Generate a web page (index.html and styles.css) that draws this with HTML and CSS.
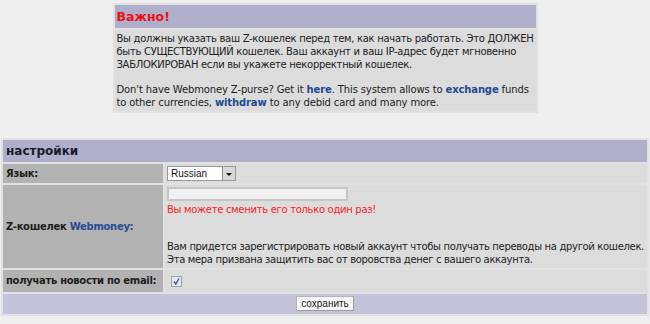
FILE: index.html
```html
<!DOCTYPE html>
<html lang="ru">
<head>
<meta charset="utf-8">
<title>Настройки</title>
<link rel="stylesheet" href="styles.css">
</head>
<body>
<table class="notice">
  <tr><th class="notice-head">Важно!</th></tr>
  <tr><td class="notice-body">Вы должны указать ваш Z-кошелек перед тем, как начать работать. Это ДОЛЖЕН быть СУЩЕСТВУЮЩИЙ кошелек. Ваш аккаунт и ваш IP-адрес будет мгновенно ЗАБЛОКИРОВАН если вы укажете некорректный кошелек.<br><br><span class="en">Don't have Webmoney Z-purse? Get it <a href="#">here</a>. This system allows to <a href="#">exchange</a> funds to other currencies, <a href="#">withdraw</a> to any debid card and many more.</span></td></tr>
</table>

<table class="settings">
  <colgroup><col class="col-label"><col class="col-value"></colgroup>
  <tr><th class="settings-head" colspan="2">настройки</th></tr>
  <tr class="row-lang">
    <td class="label">Язык:</td>
    <td class="value">
      <div class="select"><span class="select-text">Russian</span><span class="select-btn"><span class="arrow"></span></span></div>
    </td>
  </tr>
  <tr class="row-purse">
    <td class="label">Z-кошелек <span class="wm">Webmoney:</span></td>
    <td class="value">
      <div class="text-input"></div>
      <div class="warn">Вы можете сменить его только один раз!</div>
      <div class="note">Вам придется зарегистрировать новый аккаунт чтобы получать переводы на другой кошелек.<br>Эта мера призвана защитить вас от воровства денег с вашего аккаунта.</div>
    </td>
  </tr>
  <tr class="row-news">
    <td class="label">получать новости по email:</td>
    <td class="value">
      <span class="checkbox"><svg width="9" height="9" viewBox="0 0 9 9"><path d="M2 4.5 L3.8 7 L7 1.5" fill="none" stroke="#3552a8" stroke-width="1.3"/></svg></span>
    </td>
  </tr>
  <tr><td class="footer" colspan="2"><span class="save-btn">сохранить</span></td></tr>
</table>
</body>
</html>
```

FILE: styles.css
```css
html, body {
  margin: 0;
  background: #efefef;
}
body {
  padding: 3px 1px 0 1px;
  font-family: "DejaVu Sans", Verdana, sans-serif;
  font-size: 10px;
  letter-spacing: -0.3px;
  color: #222;
}
table {
  border-collapse: separate;
  border-spacing: 2px;
  background: #e1e1e1;
}
.notice {
  width: 425px;
  margin: 0 auto;
}
.notice-head {
  background: #afafcc;
  color: #ee1111;
  font-size: 12.5px;
  font-weight: bold;
  text-align: left;
  height: 23px;
  padding: 0 2px;
  letter-spacing: 0;
}
.notice-body {
  background: #dcdcdc;
  line-height: 12.8px;
  padding: 3px 1px 1px 2px;
}
.en { letter-spacing: -0.13px; }
a {
  color: #1e4a90;
  font-weight: bold;
  text-decoration: none;
}
.settings {
  width: 648px;
  margin-top: 25px;
  table-layout: fixed;
}
.col-label { width: 160px; }
.settings-head {
  background: #afafcc;
  text-align: left;
  font-size: 12px;
  font-weight: bold;
  color: #1a1a2e;
  height: 22px;
  padding: 0 3px;
  letter-spacing: 0;
}
.label {
  background: #b2b2b2;
  font-weight: bold;
  padding: 0 3px;
  color: #1e1e1e;
  white-space: nowrap;
}
.wm { color: #2a4a92; }
.value {
  background: #dcdcdc;
  padding: 2px 0 2px 2px;
}
.row-lang td { height: 15px; }
.row-news td { height: 18px; }
.select {
  display: flex;
  width: 67px;
  height: 13px;
  border: 1px solid #9a9a9a;
  background: #fff;
}
.select-text {
  flex: 1;
  font-family: "Liberation Sans", Arial, sans-serif;
  font-size: 10px;
  letter-spacing: 0;
  line-height: 13px;
  padding-left: 3px;
  color: #111;
}
.select-btn {
  width: 12px;
  background: #d8d8d8;
  border-left: 1px solid #8a8a8a;
  display: flex;
  align-items: center;
  justify-content: center;
}
.arrow {
  width: 0;
  height: 0;
  border-left: 3px solid transparent;
  border-right: 3px solid transparent;
  border-top: 3px solid #111;
  margin-top: 3px;
}
.text-input {
  width: 177px;
  height: 10px;
  border: 2px solid #c6c6c6;
  background: #f1f1f1;
}
.warn {
  color: #ff2222;
  margin-top: 2px;
  line-height: 13px;
}
.note {
  margin-top: 24px;
  line-height: 13px;
  letter-spacing: -0.33px;
  white-space: nowrap;
}
.checkbox {
  display: inline-flex;
  align-items: center;
  justify-content: center;
  width: 9px;
  height: 9px;
  border: 1px solid #a2a2a2;
  background: #e6e6ee;
  margin-left: 4px;
  vertical-align: middle;
}
.footer {
  background: #c3c3da;
  text-align: center;
  height: 20px;
  padding: 0;
}
.save-btn {
  display: inline-block;
  width: 56px;
  height: 13px;
  line-height: 13px;
  border: 1px solid #b4b4b4;
  border-right-color: #9c9c9c;
  border-bottom-color: #9c9c9c;
  background: #f7f7f7;
  font-family: "Liberation Sans", Arial, sans-serif;
  font-size: 10px;
  letter-spacing: 0;
  color: #222;
  vertical-align: middle;
}
```
